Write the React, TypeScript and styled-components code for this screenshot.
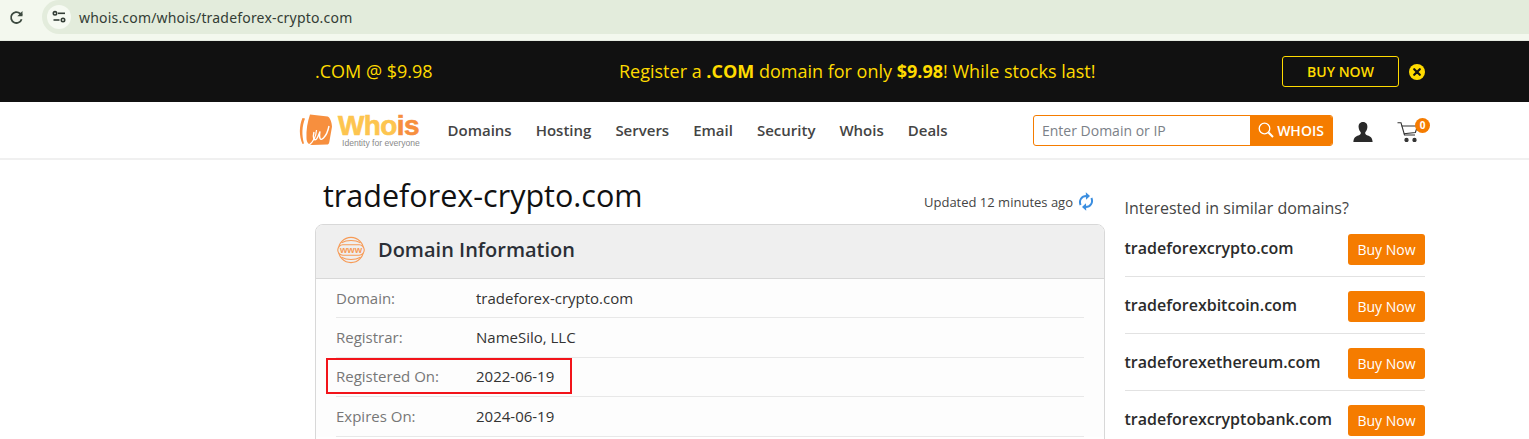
import React from "react";
import styled, { createGlobalStyle } from "styled-components";

const Global = createGlobalStyle`
  html, body { margin: 0; padding: 0; background: #fff; overflow: hidden; }
  body { font-family: "Open Sans", "Liberation Sans", sans-serif; width: 1529px; height: 439px; }
  * { box-sizing: border-box; }
`;

const Shell = styled.div`
  width: 1529px;
  height: 439px;
  overflow: hidden;
`;

const BrowserBar = styled.div`
  height: 41px;
  background: #f3f8ee;
  border-bottom: 1px solid #e6ebe1;
  display: flex;
  align-items: flex-start;
  padding-left: 9px;
`;
const Reload = styled.div`
  width: 15px;
  height: 34px;
  display: flex;
  align-items: center;
  justify-content: center;
  margin-right: 18px;
  color: #3c4a3f;
`;
const UrlPill = styled.div`
  flex: 1;
  height: 34px;
  background: #e3ecdc;
  border-radius: 17px 0 0 17px;
  display: flex;
  align-items: center;
  padding-left: 5px;
`;
const TuneBadge = styled.div`
  width: 24px;
  height: 24px;
  border-radius: 50%;
  background: #f6faf2;
  display: flex;
  align-items: center;
  justify-content: center;
  margin-right: 8px;
`;
const UrlText = styled.span`
  font-family: "Noto Sans", "Open Sans", sans-serif;
  font-size: 14px;
  color: #333d35;
  letter-spacing: 0.19px;
`;

const Banner = styled.div`
  height: 61px;
  background: #111;
  color: #ffdb00;
  display: flex;
  align-items: center;
  padding-left: 315px;
`;
const BannerPrice = styled.div`
  font-size: 18px;
  width: 304px;
  margin-bottom: 2px;
`;
const BannerMessage = styled.div`
  font-size: 18px;
  width: 663px;
  margin-bottom: 2px;
  b { font-weight: 700; }
`;
const BannerButton = styled.div`
  width: 117px;
  height: 31px;
  border: 1px solid #ffdb00;
  border-radius: 3px;
  font-size: 14px;
  font-weight: 600;
  display: flex;
  align-items: center;
  justify-content: center;
  margin-right: 10px;
`;

const Nav = styled.div`
  height: 56px;
  background: #fff;
  display: flex;
  align-items: center;
  padding-left: 299px;
`;
const Logo = styled.div`
  width: 121px;
  height: 36px;
  display: flex;
  margin-right: 27.5px;
`;
const LogoWords = styled.div`
  display: flex;
  flex-direction: column;
  margin-left: 5px;
`;
const LogoName = styled.div`
  font-family: "Liberation Sans", sans-serif;
  font-weight: 700;
  font-size: 28px;
  line-height: 27px;
  letter-spacing: -0.6px;
  color: #fdc54f;
  -webkit-text-stroke: 0.6px #fdc54f;
  span { color: #f78f3e; -webkit-text-stroke: 0.6px #f78f3e; }
`;
const LogoTag = styled.div`
  font-family: "Liberation Sans", sans-serif;
  font-size: 8.6px;
  line-height: 9px;
  color: #8a8a8a;
  margin-left: 4px;
  white-space: nowrap;
`;
const NavLinks = styled.div`
  display: flex;
  gap: 24px;
  width: 585.5px;
`;
const NavLink = styled.span`
  font-size: 15px;
  font-weight: 600;
  color: #444;
`;
const Search = styled.div`
  width: 300px;
  height: 31px;
  display: flex;
  border: 1px solid #f57c00;
  border-radius: 3px;
  overflow: hidden;
`;
const SearchInput = styled.div`
  width: 216px;
  padding-left: 8px;
  font-size: 14px;
  line-height: 29px;
  color: #7b8188;
`;
const SearchButton = styled.div`
  flex: 1;
  background: #f57c00;
  color: #fff;
  font-size: 14px;
  font-weight: 600;
  display: flex;
  align-items: center;
  justify-content: center;
  gap: 3px;
`;
const NavIcons = styled.div`
  display: flex;
  align-items: center;
  margin-left: 20px;
  margin-top: 4px;
`;
const CartWrap = styled.div`
  position: relative;
  width: 22px;
  height: 20px;
  margin-left: 24px;
`;
const CartBadge = styled.span`
  position: absolute;
  top: -4px;
  left: 18px;
  width: 15px;
  height: 15px;
  border-radius: 50%;
  background: #f57c00;
  color: #fff;
  font-size: 10px;
  font-weight: 700;
  line-height: 15px;
  text-align: center;
`;

const Page = styled.div`
  display: flex;
  border-top: 2px solid #f0f0f0;
  padding-left: 315px;
`;
const Main = styled.div`
  width: 790px;
`;
const TitleRow = styled.div`
  height: 64px;
  display: flex;
  justify-content: space-between;
  align-items: flex-start;
  padding-left: 8px;
`;
const Title = styled.h1`
  margin: 15px 0 0;
  font-size: 30.5px;
  font-weight: 400;
  line-height: 41px;
  color: #111;
`;
const Updated = styled.div`
  margin-top: 32px;
  display: flex;
  align-items: center;
  gap: 5px;
  font-size: 13px;
  line-height: 18px;
  color: #444;
  margin-right: 11px;
`;
const Card = styled.div`
  border: 1px solid #d8d8d8;
  border-radius: 8px 8px 0 0;
  height: 240px;
`;
const CardHead = styled.div`
  height: 54px;
  background: #efefef;
  border-bottom: 1px solid #d8d8d8;
  border-radius: 7px 7px 0 0;
  display: flex;
  align-items: center;
  padding: 0 0 4px 21px;
  gap: 13px;
`;
const CardTitle = styled.div`
  font-size: 20px;
  font-weight: 600;
  color: #2b2f36;
`;
const Rows = styled.div`
  padding: 0 20px;
  background: #fdfdfd;
`;
const Row = styled.div`
  position: relative;
  height: 39.4px;
  display: flex;
  align-items: center;
  padding-bottom: 1px;
  border-bottom: 1px solid #e8e8e8;
  font-size: 15px;
`;
const RowLabel = styled.span`
  width: 140px;
  color: #777;
`;
const RowValue = styled.span`
  color: #333;
`;
const Highlight = styled.div`
  position: absolute;
  left: -10px;
  top: 0px;
  width: 246px;
  height: 36px;
  border: 2.5px solid #f2141a;
`;

const Aside = styled.div`
  width: 300.5px;
  margin-left: 19.5px;
`;
const AsideTitle = styled.div`
  margin-top: 37px;
  font-size: 16px;
  line-height: 22px;
  color: #444;
  margin-bottom: 1px;
`;
const Suggestion = styled.div`
  height: 57px;
  display: flex;
  align-items: center;
  justify-content: space-between;
  border-bottom: 1px solid #e2e2e2;
  padding-top: 2px;
`;
const SuggestionName = styled.span`
  font-size: 16px;
  font-weight: 600;
  color: #2b2b2b;
  margin-top: -2px;
`;
const BuyButton = styled.div`
  width: 77px;
  height: 31px;
  background: #f57c00;
  border-radius: 3px;
  color: #fff;
  font-size: 14px;
  display: flex;
  align-items: center;
  justify-content: center;
`;

const ReloadIcon = () => (
  <svg width="15" height="15" viewBox="0 0 15 15" fill="none" stroke="currentColor" strokeWidth="1.8">
    <path d="M12.6 9.2A5.4 5.4 0 1 1 11 3.5L13 5.4" />
    <path d="M13.5 1v5.2H8.3L13.5 1Z" fill="currentColor" stroke="none" />
  </svg>
);
const TuneIcon = () => (
  <svg width="14" height="14" viewBox="0 0 14 14" fill="none" stroke="#333d35" strokeWidth="1.6">
    <circle cx="3" cy="3.3" r="1.7" />
    <path d="M6 3.3h7" />
    <path d="M1.5 10h6" />
    <circle cx="11" cy="10" r="1.7" />
  </svg>
);
const CloseIcon = () => (
  <svg width="16" height="16" viewBox="0 0 16 16">
    <circle cx="8" cy="8" r="8" fill="#ffdb00" />
    <path d="M5.2 5.2l5.6 5.6M10.8 5.2l-5.6 5.6" stroke="#111" strokeWidth="2.2" strokeLinecap="round" />
  </svg>
);
const LogoMark = () => (
  <svg width="34" height="36" viewBox="0 0 34 36" style={{ flex: "none" }}>
    <path d="M3.5 6C0 14 0 24 3.5 32L5 31.5C2.6 23 3 14 6 6.5Z" fill="#f78f3e" />
    <path d="M11 2.5L28.7 4.5C31 5.5 32.8 10 33 14.7L30.3 30C30 32 29 32.5 28 32.5L13 33C9.5 33 7.5 30 7.5 26.3C7 18 8.5 10 11 2.5Z" fill="#f78f3e" />
    <path d="M15 20C13.5 26 15 29.5 17.5 27C19 25.5 20 22 21 19.5C20 26 21 29.5 24.5 26C27 23.5 29 19 30 14" fill="none" stroke="#fff" strokeWidth="1.4" />
    <path d="M17.5 18C17 25 14 30 10 33" fill="none" stroke="#fff" strokeWidth="1.2" />
  </svg>
);
const SearchIcon = () => (
  <svg width="16" height="16" viewBox="0 0 16 16" fill="none" stroke="#fff">
    <circle cx="6.5" cy="6.5" r="5.3" strokeWidth="1.3" />
    <path d="M10.5 10.5L15 15" strokeWidth="2" />
  </svg>
);
const UserIcon = () => (
  <svg width="20" height="20" viewBox="0 0 21 21" fill="#2a2a2a">
    <path d="M10.5 0C7.2 0 5.6 2.4 5.9 5.6C6.1 8 7 9.6 8.2 11C8.4 12.6 7.6 13.4 5.6 14.2C3 15.2 .8 16 .4 21H20.6C20.2 16 18 15.2 15.4 14.2C13.4 13.4 12.6 12.6 12.8 11C14 9.6 14.9 8 15.1 5.6C15.4 2.4 13.8 0 10.5 0Z" />
  </svg>
);
const CartIcon = () => (
  <svg width="22" height="20" viewBox="0 0 22 20" fill="none" stroke="#333" strokeWidth="1.1">
    <path d="M0.5 .8H4L7.5 13H18" />
    <path d="M4.6 4H20.5L18.4 10.5L6.8 11.8" />
    <circle cx="9.5" cy="18" r="1.6" fill="#333" />
    <circle cx="17.5" cy="18" r="1.6" fill="#333" />
  </svg>
);
const SyncIcon = () => (
  <svg width="16" height="19" viewBox="0 0 16 19" fill="none" stroke="#3b8ee0" strokeWidth="2">
    <path d="M2.6 13C.6 8.5 3.6 3.9 8.5 4" />
    <path d="M7.8 .2L12 4L8 7.8Z" fill="#3b8ee0" stroke="none" />
    <path d="M13.4 6C15.4 10.5 12.4 15.1 7.5 15" />
    <path d="M8.2 18.8L4 15L8 11.2Z" fill="#3b8ee0" stroke="none" />
  </svg>
);
const WwwIcon = () => (
  <svg width="28" height="28" viewBox="0 0 28 28" fill="none" stroke="#f79a55" strokeWidth="1.1">
    <circle cx="14" cy="14" r="12.6" />
    <path d="M4.5 6.8C10 3.8 18 3.8 23.5 6.8M4.5 21.2C10 24.2 18 24.2 23.5 21.2" />
    <rect x=".8" y="8.8" width="26.4" height="10.4" rx="5" fill="#efefef" />
    <text x="14" y="17" textAnchor="middle" fontFamily="Liberation Sans, sans-serif" fontSize="9.5" fontWeight="700" fill="#f79a55" stroke="none">www</text>
  </svg>
);

const links = ["Domains", "Hosting", "Servers", "Email", "Security", "Whois", "Deals"];
const rows = [
  ["Domain:", "tradeforex-crypto.com"],
  ["Registrar:", "NameSilo, LLC"],
  ["Registered On:", "2022-06-19"],
  ["Expires On:", "2024-06-19"],
];
const suggestions = ["tradeforexcrypto.com", "tradeforexbitcoin.com", "tradeforexethereum.com", "tradeforexcryptobank.com"];

export default function App() {
  return (
    <Shell>
      <Global />
      <BrowserBar>
        <Reload><ReloadIcon /></Reload>
        <UrlPill>
          <TuneBadge><TuneIcon /></TuneBadge>
          <UrlText>whois.com/whois/tradeforex-crypto.com</UrlText>
        </UrlPill>
      </BrowserBar>
      <Banner>
        <BannerPrice>.COM @ $9.98</BannerPrice>
        <BannerMessage>Register a <b>.COM</b> domain for only <b>$9.98</b>! While stocks last!</BannerMessage>
        <BannerButton>BUY NOW</BannerButton>
        <CloseIcon />
      </Banner>
      <Nav>
        <Logo>
          <LogoMark />
          <LogoWords>
            <LogoName>Who<span>is</span></LogoName>
            <LogoTag>Identity for everyone</LogoTag>
          </LogoWords>
        </Logo>
        <NavLinks>
          {links.map((l) => <NavLink key={l}>{l}</NavLink>)}
        </NavLinks>
        <Search>
          <SearchInput>Enter Domain or IP</SearchInput>
          <SearchButton><SearchIcon />WHOIS</SearchButton>
        </Search>
        <NavIcons>
          <UserIcon />
          <CartWrap>
            <CartIcon />
            <CartBadge>0</CartBadge>
          </CartWrap>
        </NavIcons>
      </Nav>
      <Page>
        <Main>
          <TitleRow>
            <Title>tradeforex-crypto.com</Title>
            <Updated>Updated 12 minutes ago <SyncIcon /></Updated>
          </TitleRow>
          <Card>
            <CardHead>
              <WwwIcon />
              <CardTitle>Domain Information</CardTitle>
            </CardHead>
            <Rows>
              {rows.map(([k, v]) => (
                <Row key={k}>
                  <RowLabel>{k}</RowLabel>
                  <RowValue>{v}</RowValue>
                  {k === "Registered On:" && <Highlight />}
                </Row>
              ))}
            </Rows>
          </Card>
        </Main>
        <Aside>
          <AsideTitle>Interested in similar domains?</AsideTitle>
          {suggestions.map((s) => (
            <Suggestion key={s}>
              <SuggestionName>{s}</SuggestionName>
              <BuyButton>Buy Now</BuyButton>
            </Suggestion>
          ))}
        </Aside>
      </Page>
    </Shell>
  );
}
